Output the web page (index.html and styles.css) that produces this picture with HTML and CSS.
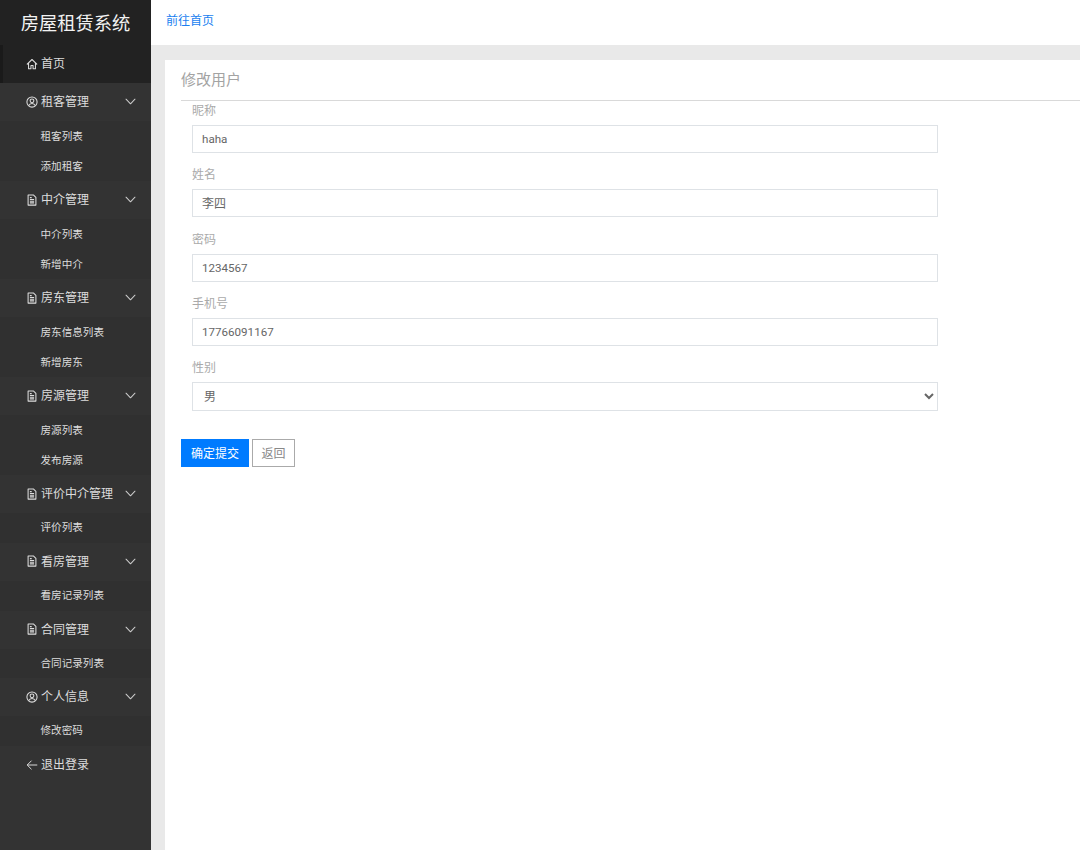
FILE: index.html
```html
<!DOCTYPE html>
<html lang="zh-CN">
<head>
<meta charset="utf-8">
<title>房屋租赁系统</title>
<link rel="stylesheet" href="styles.css">
</head>
<body>
<svg class="defs" width="0" height="0" aria-hidden="true">
  <symbol id="i-home" viewBox="0 0 16 16"><path d="M1.6 8.2 8 2l6.4 6.2M3.4 6.8v7.4h3.2V10h2.8v4.2h3.2V6.8" fill="none" stroke="currentColor" stroke-width="1.4" stroke-linejoin="round" stroke-linecap="round"/></symbol>
  <symbol id="i-user" viewBox="0 0 16 16"><g fill="none" stroke="currentColor" stroke-width="1.4"><circle cx="8" cy="8" r="6.8"/><circle cx="8" cy="6.4" r="2.5"/><path d="M3.6 12.9C4.4 10.9 6 10 8 10s3.6.9 4.4 2.9"/></g></symbol>
  <symbol id="i-file" viewBox="0 0 16 16"><g fill="none" stroke="currentColor" stroke-width="1.4" stroke-linejoin="round"><path d="M2.8 1.2h7l3.4 3.4v10.2H2.8z"/><path d="M5.2 7.4h5.6M5.2 9.6h5.6M5.2 11.8h5.6M5.2 4.8h2.4"/></g></symbol>
  <symbol id="i-chev" viewBox="0 0 16 16"><path d="M2.5 5.2 8 10.8l5.5-5.6" fill="none" stroke="currentColor" stroke-width="1.3" stroke-linecap="round" stroke-linejoin="round"/></symbol>
  <symbol id="i-back" viewBox="0 0 16 16"><path d="M14.5 8H2M7 2.6 1.6 8 7 13.4" fill="none" stroke="currentColor" stroke-width="1.3" stroke-linecap="round" stroke-linejoin="round"/></symbol>
</svg>
<div class="app">
  <aside class="sidebar">
    <div class="brand">房屋租赁系统</div>
    <nav class="menu">
      <a class="item active"><svg class="ico"><use href="#i-home"/></svg><span>首页</span></a>

      <a class="item"><svg class="ico"><use href="#i-user"/></svg><span>租客管理</span><svg class="chev"><use href="#i-chev"/></svg></a>
      <div class="sub"><a>租客列表</a><a>添加租客</a></div>

      <a class="item"><svg class="ico"><use href="#i-file"/></svg><span>中介管理</span><svg class="chev"><use href="#i-chev"/></svg></a>
      <div class="sub"><a>中介列表</a><a>新增中介</a></div>

      <a class="item"><svg class="ico"><use href="#i-file"/></svg><span>房东管理</span><svg class="chev"><use href="#i-chev"/></svg></a>
      <div class="sub"><a>房东信息列表</a><a>新增房东</a></div>

      <a class="item"><svg class="ico"><use href="#i-file"/></svg><span>房源管理</span><svg class="chev"><use href="#i-chev"/></svg></a>
      <div class="sub"><a>房源列表</a><a>发布房源</a></div>

      <a class="item"><svg class="ico"><use href="#i-file"/></svg><span>评价中介管理</span><svg class="chev"><use href="#i-chev"/></svg></a>
      <div class="sub tight"><a>评价列表</a></div>

      <a class="item"><svg class="ico"><use href="#i-file"/></svg><span>看房管理</span><svg class="chev"><use href="#i-chev"/></svg></a>
      <div class="sub tight"><a>看房记录列表</a></div>

      <a class="item"><svg class="ico"><use href="#i-file"/></svg><span>合同管理</span><svg class="chev"><use href="#i-chev"/></svg></a>
      <div class="sub tight"><a>合同记录列表</a></div>

      <a class="item"><svg class="ico"><use href="#i-user"/></svg><span>个人信息</span><svg class="chev"><use href="#i-chev"/></svg></a>
      <div class="sub tight"><a>修改密码</a></div>

      <a class="item"><svg class="ico"><use href="#i-back"/></svg><span>退出登录</span></a>
    </nav>
  </aside>
  <main class="main">
    <header class="topbar"><a class="home-link">前往首页</a></header>
    <section class="panel">
      <h2 class="panel-title">修改用户</h2>
      <form class="form">
        <div class="group"><label>昵称</label><input class="control latin" type="text" value="haha"></div>
        <div class="group"><label>姓名</label><input class="control" type="text" value="李四"></div>
        <div class="group"><label>密码</label><input class="control latin" type="text" value="1234567"></div>
        <div class="group"><label>手机号</label><input class="control latin" type="text" value="17766091167"></div>
        <div class="group"><label>性别</label><select class="control select"><option>男</option><option>女</option></select></div>
      </form>
      <div class="actions">
        <button class="btn primary" type="button">确定提交</button>
        <button class="btn plain" type="button">返回</button>
      </div>
    </section>
  </main>
</div>
</body>
</html>
```
FILE: styles.css
```css
* { box-sizing: border-box; }
html, body { height: 100%; }
body {
  margin: 0;
  overflow: hidden;
  font-family: "Noto Sans", "Noto Sans CJK SC", sans-serif;
  background: #e9e9e9;
  color: #666;
}
.defs { position: absolute; }
.app { display: flex; height: 850px; }

.sidebar { width: 151px; flex: none; background: #333; color: #ddd; }
.brand {
  height: 45px;
  background: #222;
  color: #f2f2f2;
  font-size: 18.3px;
  line-height: 46px;
  text-align: center;
}
.menu { display: flex; flex-direction: column; }
.item {
  height: 38px;
  display: flex;
  align-items: center;
  padding: 0 14px 0 26px;
  font-size: 12px;
  color: #ddd;
}
.item span { margin-bottom: 2px; }
.item.active { background: #222; border-left: 3px solid #1a1a1a; padding-left: 23px; }
.ico { width: 12px; height: 12px; margin: 0 3px 1px 0; flex: none; }
.chev { width: 13px; height: 13px; margin: 0 0 1px auto; flex: none; color: #ccc; }
.sub { background: #303030; }
.sub a {
  display: block;
  height: 30px;
  line-height: 30px;
  padding-left: 40.5px;
  font-size: 10.6px;
  color: #ddd;
}
.sub.tight a { height: 29.75px; line-height: 29px; }

.main { flex: 1; min-width: 0; display: flex; flex-direction: column; }
.topbar { height: 45px; flex: none; background: #fff; padding: 0 15px; line-height: 41px; font-size: 12px; }
.home-link { color: #1a7ff0; }

.panel { flex: 1; margin: 15px 0 0 14px; background: #fff; padding-left: 16px; }
.panel-title {
  margin: 0;
  height: 41px;
  line-height: 38px;
  font-size: 15px;
  font-weight: 400;
  color: #a3a3a3;
  border-bottom: 1px solid #d9d9d9;
}
.form { width: 757px; padding-left: 11px; display: flex; flex-direction: column; gap: 12.1px; }
.group { display: flex; flex-direction: column; }
.group label { height: 24.2px; line-height: 19px; font-size: 12px; color: #aaa; }
.control {
  width: 746px;
  height: 28px;
  padding: 0 9px;
  border: 1px solid #dee2e6;
  border-radius: 0;
  background: #fff;
  font: inherit;
  font-size: 12px;
  color: #666;
  outline: none;
}
.latin { font-family: "Roboto", "Noto Sans", sans-serif; font-size: 11.6px; }
.select { height: 29px; padding: 0 7px; }
.actions { display: flex; gap: 3px; margin-top: 28px; }
.btn { height: 28px; padding: 0; font: inherit; font-size: 12px; border-radius: 0; }
.primary { width: 68px; background: #007bff; border: 1px solid #007bff; color: #fff; }
.plain { width: 43px; background: #fff; border: 1px solid #aaa; color: #888; }
```
